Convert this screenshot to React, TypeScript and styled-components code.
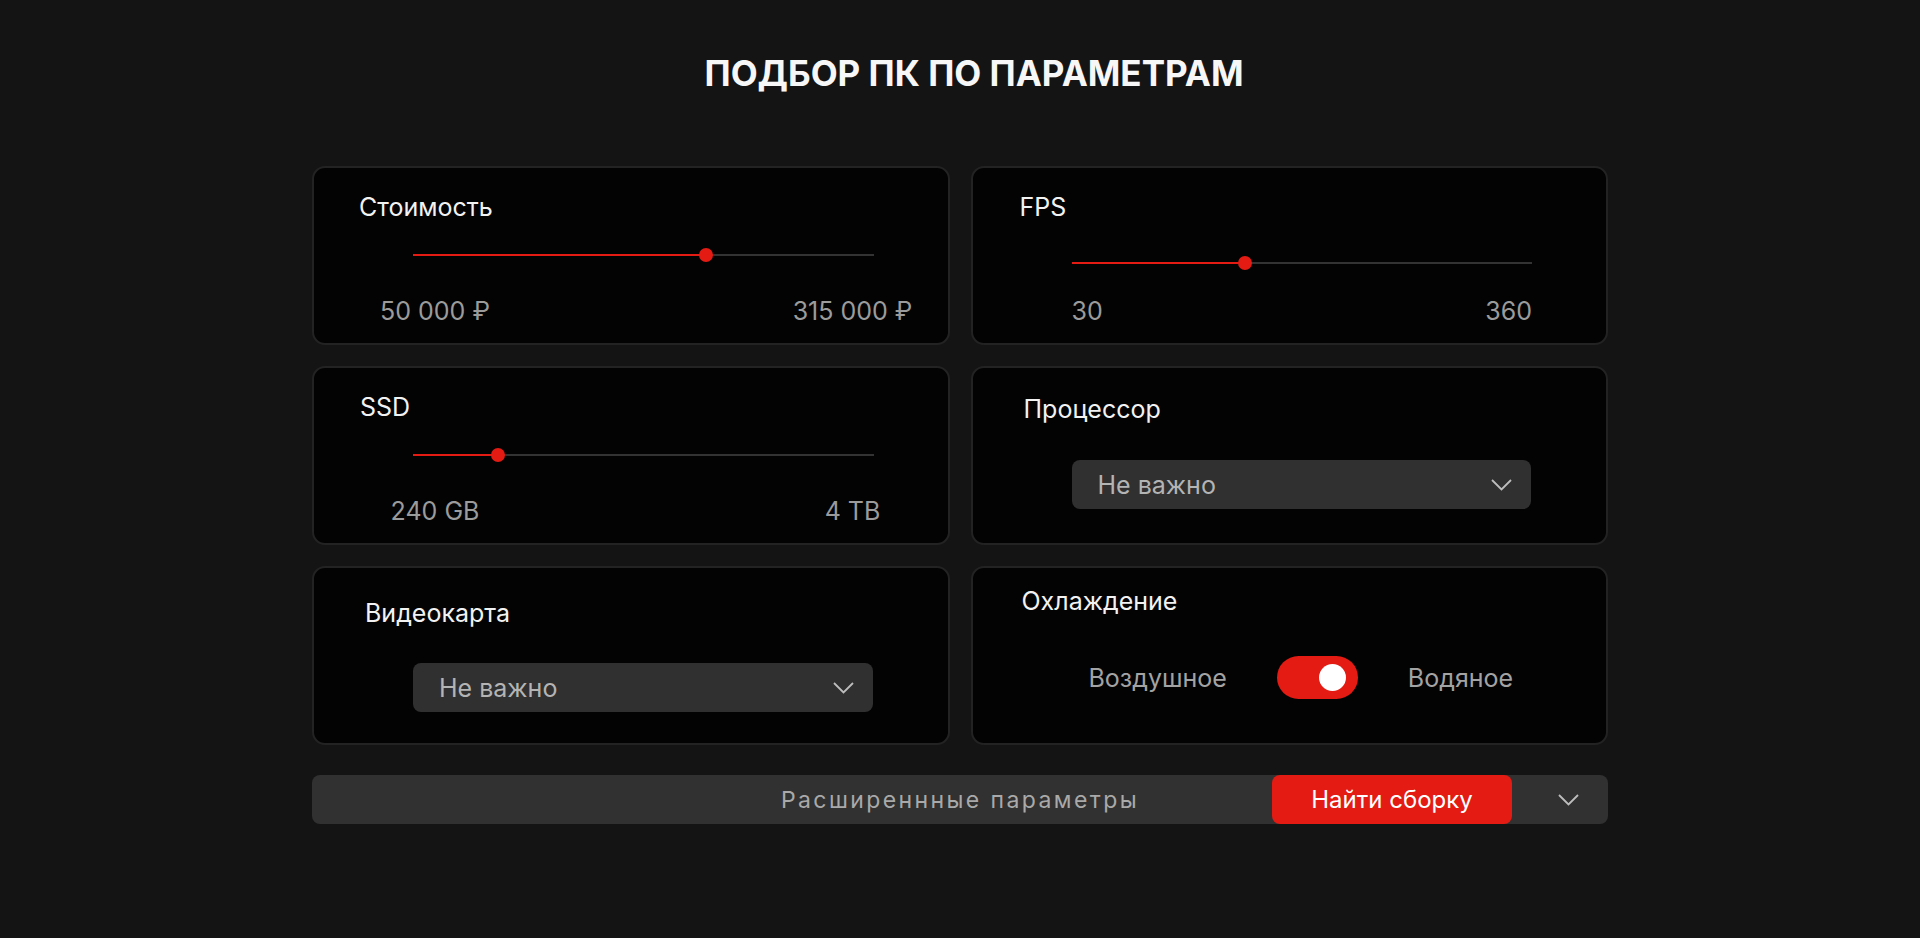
import React from "react";
import styled, { createGlobalStyle } from "styled-components";

const GlobalStyle = createGlobalStyle`
  * {
    box-sizing: border-box;
  }

  body {
    margin: 0;
    background: #141414;
    font-family: Inter, "Noto Sans", sans-serif;
    color: #f2f2f2;
  }
`;

const Page = styled.div`
  min-height: 100vh;
  padding-top: 52px;
`;

const Title = styled.h1`
  margin: 0;
  padding-left: 28px;
  text-align: center;
  font-size: 35px;
  line-height: 42px;
  font-weight: 700;
  color: #f7f7f7;
`;

const Container = styled.div`
  width: 1296px;
  margin: 72px auto 0;
`;

const Grid = styled.div`
  display: grid;
  grid-template-columns: 1fr 1fr;
  grid-auto-rows: 179px;
  column-gap: 21px;
  row-gap: 21px;
`;

const Card = styled.div<{ $top: number }>`
  display: flex;
  flex-direction: column;
  padding-top: ${(p) => p.$top}px;
  background: #030303;
  border: 2px solid #232323;
  border-radius: 13px;
`;

const Label = styled.div<{ $indent: number }>`
  margin-left: ${(p) => p.$indent}px;
  font-size: 25px;
  line-height: 30px;
  color: #f2f2f2;
`;

const Track = styled.div<{ $gap: number }>`
  position: relative;
  height: 14px;
  margin: ${(p) => p.$gap}px 74px 0 99px;

  &::before {
    content: "";
    position: absolute;
    left: 0;
    right: 0;
    top: 6px;
    height: 2px;
    background: #333333;
  }
`;

const Fill = styled.div`
  position: absolute;
  left: 0;
  top: 6px;
  height: 2px;
  background: #e31b13;
`;

const Thumb = styled.div`
  position: absolute;
  top: 0;
  width: 14px;
  height: 14px;
  margin-left: -7px;
  border-radius: 50%;
  background: #e31b13;
`;

const Values = styled.div<{ $gap: number; $centered?: boolean }>`
  display: flex;
  justify-content: space-between;
  margin: ${(p) => p.$gap}px ${(p) => (p.$centered ? "35px 0 61px" : "74px 0 99px")};
`;

const Value = styled.div<{ $centered?: boolean }>`
  width: ${(p) => (p.$centered ? "120px" : "auto")};
  text-align: center;
  font-size: 25px;
  line-height: 30px;
  color: #9b9b9b;
`;

const Select = styled.div<{ $gap: number }>`
  display: flex;
  align-items: center;
  justify-content: space-between;
  height: 49px;
  margin: ${(p) => p.$gap}px 75px 0 99px;
  padding: 0 19px 0 26px;
  background: #303030;
  border-radius: 8px;
  font-size: 25px;
  color: #b4b4b4;
`;

const Switcher = styled.div`
  display: flex;
  align-items: center;
  margin: 40px 0 0 116px;
  gap: 50px;
`;

const Option = styled.span`
  font-size: 25px;
  color: #a3a3a3;
`;

const Toggle = styled.div`
  display: flex;
  align-items: center;
  justify-content: flex-end;
  width: 81px;
  height: 43px;
  padding-right: 12px;
  border-radius: 22px;
  background: #e31b13;
`;

const Knob = styled.div`
  width: 27px;
  height: 27px;
  border-radius: 50%;
  background: #ffffff;
`;

const Bar = styled.div`
  display: grid;
  grid-template-columns: 1fr auto 1fr;
  align-items: center;
  height: 49px;
  margin-top: 30px;
  background: #313131;
  border-radius: 8px;
`;

const BarText = styled.span`
  grid-column: 2;
  font-size: 23px;
  letter-spacing: 2.4px;
  color: #a9a9a9;
`;

const BarActions = styled.div`
  display: flex;
  justify-content: flex-end;
  align-items: center;
  height: 100%;
`;

const FindButton = styled.button`
  width: 240px;
  height: 100%;
  border: none;
  border-radius: 8px;
  background: #e31b13;
  color: #ffffff;
  font-family: inherit;
  font-size: 24px;
  cursor: pointer;
`;

const Expand = styled.div`
  display: flex;
  align-items: center;
  padding: 0 29px 0 46px;
`;

function Chevron() {
  return (
    <svg width="21" height="12" viewBox="0 0 21 12" fill="none">
      <polyline points="1,1 10.5,10.5 20,1" stroke="#bdbdbd" strokeWidth="1.8" />
    </svg>
  );
}

type RangeProps = {
  label: string;
  indent: number;
  percent: number;
  min: string;
  max: string;
  trackGap: number;
  valuesGap: number;
  centered?: boolean;
};

function RangeCard({ label, indent, percent, min, max, trackGap, valuesGap, centered }: RangeProps) {
  return (
    <Card $top={24}>
      <Label $indent={indent}>{label}</Label>
      <Track $gap={trackGap}>
        <Fill style={{ width: `${percent}%` }} />
        <Thumb style={{ left: `${percent}%` }} />
      </Track>
      <Values $gap={valuesGap} $centered={centered}>
        <Value $centered={centered}>{min}</Value>
        <Value $centered={centered}>{max}</Value>
      </Values>
    </Card>
  );
}

function SelectCard({ label, top, gap }: { label: string; top: number; gap: number }) {
  return (
    <Card $top={top}>
      <Label $indent={51}>{label}</Label>
      <Select $gap={gap}>
        <span>Не важно</span>
        <Chevron />
      </Select>
    </Card>
  );
}

export default function App() {
  return (
    <Page>
      <GlobalStyle />
      <Title>ПОДБОР ПК ПО ПАРАМЕТРАМ</Title>
      <Container>
        <Grid>
          <RangeCard
            label="Стоимость"
            indent={45}
            percent={63.7}
            min="50 000 ₽"
            max="315 000 ₽"
            trackGap={26}
            valuesGap={34}
            centered
          />
          <RangeCard
            label="FPS"
            indent={47}
            percent={37.6}
            min="30"
            max="360"
            trackGap={34}
            valuesGap={26}
          />
          <RangeCard
            label="SSD"
            indent={46}
            percent={18.4}
            min="240 GB"
            max="4 TB"
            trackGap={26}
            valuesGap={34}
            centered
          />
          <SelectCard label="Процессор" top={26} gap={36} />
          <SelectCard label="Видеокарта" top={30} gap={35} />
          <Card $top={18}>
            <Label $indent={49}>Охлаждение</Label>
            <Switcher>
              <Option>Воздушное</Option>
              <Toggle>
                <Knob />
              </Toggle>
              <Option>Водяное</Option>
            </Switcher>
          </Card>
        </Grid>
        <Bar>
          <BarText>Расширеннные параметры</BarText>
          <BarActions>
            <FindButton>Найти сборку</FindButton>
            <Expand>
              <Chevron />
            </Expand>
          </BarActions>
        </Bar>
      </Container>
    </Page>
  );
}
